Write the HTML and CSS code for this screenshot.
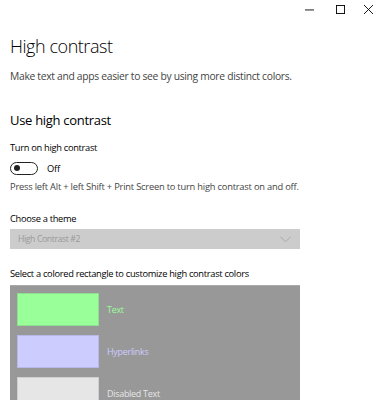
FILE: index.html
```html
<!DOCTYPE html>
<html>
<head>
<meta charset="utf-8">
<link rel="stylesheet" href="styles.css">
</head>
<body>
<div class="titlebar">
  <span class="tb-btn"><svg width="10" height="10" viewBox="0 0 10 10"><path d="M0 5.5h10" stroke="#000" stroke-width="1"/></svg></span>
  <span class="tb-btn"><svg width="10" height="10" viewBox="0 0 10 10"><rect x="0.5" y="0.5" width="9" height="9" fill="none" stroke="#000" stroke-width="1"/></svg></span>
  <span class="tb-btn"><svg width="10" height="10" viewBox="0 0 10 10"><path d="M0 0L10 10M10 0L0 10" stroke="#000" stroke-width="1"/></svg></span>
</div>
<main class="page">
  <h1 class="title">High contrast</h1>
  <p class="desc">Make text and apps easier to see by using more distinct colors.</p>
  <h2 class="section">Use high contrast</h2>
  <div class="label">Turn on high contrast</div>
  <div class="toggle-row">
    <span class="toggle"><span class="knob"></span></span>
    <span class="toggle-text">Off</span>
  </div>
  <p class="hint">Press left Alt + left Shift + Print Screen to turn high contrast on and off.</p>
  <div class="label theme-label">Choose a theme</div>
  <div class="dropdown">
    <span>High Contrast #2</span>
    <svg width="11" height="7" viewBox="0 0 11 7"><path d="M0.5 0.8L5.5 5.8L10.5 0.8" fill="none" stroke="#a8a8a8" stroke-width="1"/></svg>
  </div>
  <div class="label select-label">Select a colored rectangle to customize high contrast colors</div>
  <div class="panel">
    <div class="swatch-row"><span class="swatch sw-text"></span><span class="sw-label lb-text">Text</span></div>
    <div class="swatch-row"><span class="swatch sw-link"></span><span class="sw-label lb-link">Hyperlinks</span></div>
    <div class="swatch-row"><span class="swatch sw-dis"></span><span class="sw-label lb-dis">Disabled Text</span></div>
  </div>
</main>
</body>
</html>
```
FILE: styles.css
```css
html, body {
  margin: 0;
  padding: 0;
  background: #fff;
  overflow: hidden;
}
body {
  width: 380px;
  height: 400px;
  font-family: "Open Sans", "Noto Sans", sans-serif;
  color: #000;
}
.titlebar {
  display: flex;
  justify-content: flex-end;
  height: 18px;
  align-items: center;
}
.tb-btn {
  width: 31px;
  display: flex;
  justify-content: center;
  align-items: center;
  height: 18px;
}
.tb-btn:last-child {
  width: 24px;
}
.tb-btn svg {
  display: block;
  width: 9px;
  height: 9px;
}
.page {
  padding: 0 10px;
}
.title {
  margin: 14px 0 0 0;
  font-size: 18px;
  font-weight: 300;
  line-height: 28px;
  letter-spacing: -0.45px;
}
.desc {
  margin: 9px 0 0 0;
  font-size: 10.3px;
  line-height: 14px;
  letter-spacing: -0.3px;
  color: #444;
}
.section {
  margin: 27px 0 0 0;
  font-size: 13px;
  font-weight: 400;
  line-height: 20px;
  letter-spacing: -0.3px;
}
.label {
  font-size: 9.3px;
  line-height: 14px;
  margin-top: 11px;
  letter-spacing: -0.3px;
}
.toggle-row {
  display: flex;
  align-items: center;
  margin-top: 6px;
  height: 14px;
}
.toggle {
  box-sizing: border-box;
  width: 28px;
  height: 13px;
  border: 1.5px solid #222;
  border-radius: 7px;
  display: flex;
  align-items: center;
  padding-left: 3px;
}
.knob {
  width: 6px;
  height: 6px;
  border-radius: 50%;
  background: #222;
}
.toggle-text {
  font-size: 9.3px;
  margin-left: 9px;
  letter-spacing: -0.2px;
}
.hint {
  margin: 5px 0 0 0;
  font-size: 9.3px;
  line-height: 14px;
  letter-spacing: -0.2px;
  color: #444;
  white-space: nowrap;
}
.theme-label {
  margin-top: 18px;
}
.dropdown {
  margin-top: 3px;
  width: 290px;
  height: 20px;
  background: #ccc;
  display: flex;
  align-items: center;
  justify-content: space-between;
  padding: 0 9px 0 8px;
  box-sizing: border-box;
  font-size: 8.7px;
  letter-spacing: -0.4px;
  color: #999;
}
.select-label {
  margin-top: 18px;
}
.panel {
  margin-top: 4px;
  width: 290px;
  height: 130px;
  background: #989898;
  border-top: 1px solid #aaa;
  box-sizing: border-box;
  padding: 7px 7px;
  display: flex;
  flex-direction: column;
  gap: 9px;
}
.swatch-row {
  display: flex;
  align-items: center;
}
.swatch {
  width: 82px;
  height: 33px;
  box-sizing: border-box;
  flex: none;
}
.sw-text { background: #99ff99; border: 1px solid #8ee08e; }
.sw-link { background: #ccccff; border: 1px solid #b8b8e8; }
.sw-dis { background: #e6e6e6; border: 1px solid #d0d0d0; }
.sw-label {
  margin-left: 8px;
  font-size: 9px;
  letter-spacing: -0.3px;
}
.lb-text { color: #99ff99; }
.lb-link { color: #ccccff; }
.lb-dis { color: #e6e6e6; }
```
